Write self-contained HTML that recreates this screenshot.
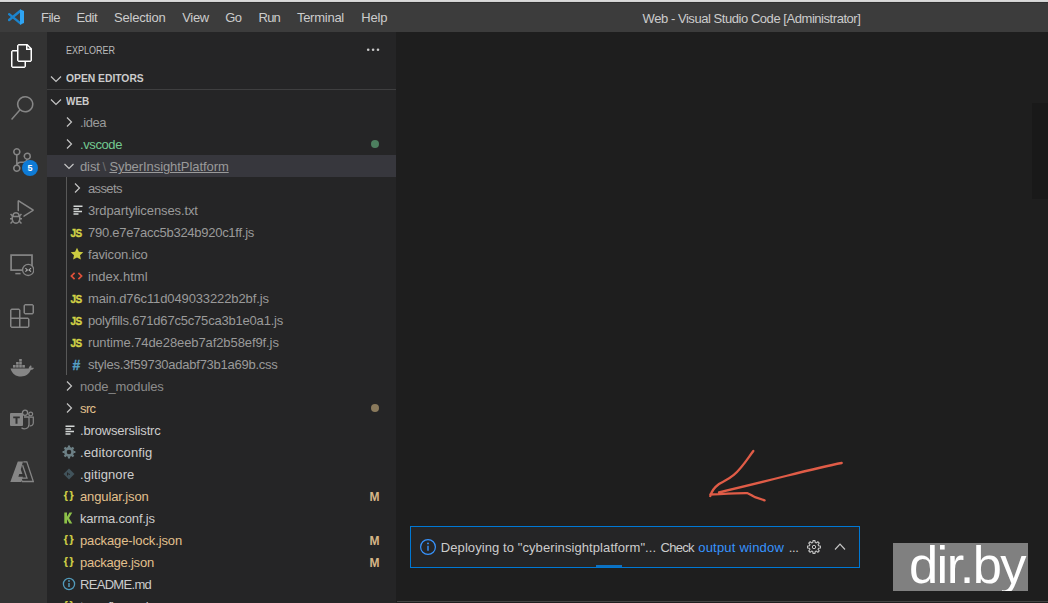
<!DOCTYPE html>
<html><head><meta charset="utf-8"><title>Web - Visual Studio Code</title>
<style>
*{box-sizing:border-box;margin:0;padding:0}
html,body{width:1048px;height:603px;overflow:hidden;background:#1e1e1e}
body{font-family:"Liberation Sans",sans-serif;font-size:13px;color:#cccccc;position:relative}
#top{position:absolute;left:0;top:0;width:1048px;height:3px;background:linear-gradient(#dcdcdc 0,#d4d4d4 1.5px,#8a8a8a 2px,#303030 2.2px,#303030 3px);z-index:5}
#title{position:absolute;left:0;top:2px;width:1048px;height:30px;background:#3c3c3c}
#title .m{position:absolute;top:1px;height:29px;line-height:30px;white-space:nowrap;font-size:13px;color:#cccccc}
#title .t{position:absolute;top:1px;height:29px;line-height:30px;font-size:12px;color:#cccccc;left:643px;white-space:nowrap}
#act{position:absolute;left:0;top:32px;width:47px;height:571px;background:#333333}
#act svg{position:absolute}
#side{position:absolute;left:47px;top:32px;width:349px;height:571px;background:#252526;overflow:hidden}
#tree{position:absolute;left:-47px;top:-32px;width:443px;height:634px}
.row{position:absolute;left:47px;width:349px;height:22px}
.row.sel{background:#37373d}
.row .ic{position:absolute;top:3px;width:16px;height:16px;margin-left:-47px}
.row .lbl{position:absolute;top:1px;height:22px;line-height:22px;white-space:nowrap;margin-left:-47px;color:#cccccc}
.row .lbl.green{color:#73c991}
.row .lbl.mod{color:#e2c08d}
.row .lbl.dim{color:#9a9a9a}
.row .lbl.sep{color:#6e6e6e}
.row .lbl.ign{color:#8c8c8c}
.dot{position:absolute;left:324px;top:6.5px;width:8px;height:8px;border-radius:50%}
.mb{position:absolute;left:322.5px;top:1px;line-height:22px;font-size:12px;font-weight:bold;color:#d6b687}
.fi{display:block;width:16px;height:16px;line-height:16px;text-align:center;font-weight:bold}
.fi.js{color:#d2d246;-webkit-text-stroke:0.35px #d2d246;font-size:10px;letter-spacing:-0.5px;position:relative;top:1.6px;left:-1px}
.fi.json{color:#d2d246;-webkit-text-stroke:0.2px #d2d246;font-size:10.5px;letter-spacing:1.6px;line-height:15px;position:relative;left:0.5px;top:0.3px}
.fi.css{color:#559fc4;font-size:14px;-webkit-text-stroke:0.3px #559fc4;position:relative;left:-0.5px;top:0.5px}
.hdr{position:absolute;font-size:11px;white-space:nowrap}
#guide{position:absolute;left:66px;top:177px;width:1px;height:198px;background:#585858}
#hsep{position:absolute;left:47px;top:89px;width:349px;height:1px;background:#3f3f40}
#notif{position:absolute;left:410px;top:526px;width:450px;height:42px;background:#252526;border:1px solid #0078d4}
#notif .msg{position:absolute;left:30px;top:0;line-height:41px;font-size:13px;color:#cccccc;white-space:nowrap}
#notif .msg.lk{color:#3794ff}
#prog{position:absolute;left:185px;top:38px;width:26px;height:2px;background:#0e70c0}
#wm{position:absolute;left:893px;top:543px;width:135px;height:48px;background:#808080;color:#fff;overflow:hidden}
#wm span{position:absolute;left:16px;top:-7.6px;font-size:52.5px;line-height:60px;letter-spacing:-1.6px;white-space:nowrap}
#mini{position:absolute;left:1032px;top:103px;width:16px;height:96px;background:#191919}
#bline{position:absolute;left:397px;top:601px;width:651px;height:1px;background:#444}
</style></head><body>
<div id="top"></div>
<div id="title">
<svg style="position:absolute;left:8px;top:6.700px" width="16.200" height="16.200" viewBox="0 0 100 100"><path d="M77 11 L7 68 M77 89 L7 32" stroke="#1c84cc" stroke-width="15" fill="none" stroke-linecap="round"/><path d="M74 2 L99 13 V87 L74 98 Z" fill="#2fa4f3"/></svg>
<span class="m" style="left:41.0px;letter-spacing:-0.488px">File</span>
<span class="m" style="left:76.6px;letter-spacing:-0.452px">Edit</span>
<span class="m" style="left:114.0px;letter-spacing:-0.22px">Selection</span>
<span class="m" style="left:182.2px;letter-spacing:-0.313px">View</span>
<span class="m" style="left:225.3px;letter-spacing:-0.572px">Go</span>
<span class="m" style="left:258.5px;letter-spacing:-0.753px">Run</span>
<span class="m" style="left:296.9px;letter-spacing:-0.253px">Terminal</span>
<span class="m" style="left:361.2px;letter-spacing:-0.138px">Help</span>
<span class="t" style="left:642.6px;font-size:13px;top:1.500px;letter-spacing:-0.45px">Web - Visual Studio Code [Administrator]</span>
</div>
<div id="act">
<svg style="left:10px;top:12px" width="24" height="24" viewBox="0 0 24 24"><path d="M17.5 0h-9L7 1.5V6H2.5L1 7.5v15.07L2.5 24h12.07L16 22.57V18h4.7l1.3-1.43V4.5L17.5 0zm0 2.12l2.38 2.38H17.5V2.12zm-3 20.38h-12v-15H7v9.07L8.5 18h6v4.5zm6-6h-12v-15H16V6h4.5v10.5z" fill="#ffffff"/></svg>
<svg style="left:10px;top:64px" width="24" height="24" viewBox="0 0 24 24"><path d="M15.25 0a8.25 8.25 0 0 0-6.18 13.72L1 22.88l1.12 1 8.05-9.12A8.251 8.251 0 1 0 15.25.01V0zm0 15a6.75 6.75 0 1 1 0-13.5 6.75 6.75 0 0 1 0 13.5z" fill="#868686"/></svg>
<svg style="left:10px;top:116px" width="24" height="24" viewBox="0 0 24 24"><path d="M21.007 8.222A3.738 3.738 0 0 0 15.045 5.2a3.737 3.737 0 0 0 1.156 6.583 2.988 2.988 0 0 1-2.668 1.67h-2.99a4.456 4.456 0 0 0-2.989 1.165V7.4a3.737 3.737 0 1 0-1.494 0v9.117a3.776 3.776 0 1 0 1.816.099 2.99 2.99 0 0 1 2.668-1.667h2.99a4.484 4.484 0 0 0 4.223-3.039 3.736 3.736 0 0 0 3.25-3.687zM4.565 3.738a2.242 2.242 0 1 1 4.484 0 2.242 2.242 0 0 1-4.484 0zm4.484 16.441a2.242 2.242 0 1 1-4.484 0 2.242 2.242 0 0 1 4.484 0zm8.221-9.715a2.242 2.242 0 1 1 0-4.485 2.242 2.242 0 0 1 0 4.485z" fill="#868686"/></svg>
<svg style="left:10px;top:168px" width="24" height="24" viewBox="0 0 24 24"><path d="M10.94 13.5l-1.32 1.32a3.73 3.73 0 0 0-7.24 0L1.06 13.5 0 14.56l1.72 1.72-.22.22V18H0v1.5h1.5v.08c.077.489.214.966.41 1.42L0 22.94 1.06 24l1.65-1.65A4.308 4.308 0 0 0 6 24a4.31 4.31 0 0 0 3.29-1.65L10.94 24 12 22.94 10.09 21c.198-.464.336-.951.41-1.45v-.1H12V18h-1.5v-1.5l-.22-.22L12 14.56l-1.06-1.06zM6 13.5a2.25 2.25 0 0 1 2.25 2.25h-4.5A2.25 2.25 0 0 1 6 13.5zm3 6a3.33 3.33 0 0 1-3 3 3.33 3.33 0 0 1-3-3v-2.25h6v2.25zm14.76-9.9v1.26L13.5 17.37V15.6l8.5-5.37L9 2v9.46a5.07 5.07 0 0 0-1.5-.72V.63L8.64 0l15.12 9.6z" fill="#868686"/></svg>
<svg style="left:10px;top:221px" width="24" height="24" viewBox="0 0 24 24"><rect x="1.1" y="2.1" width="20.9" height="15" fill="none" stroke="#868686" stroke-width="1.7"/><path d="M5.300 20.600h5.300" stroke="#868686" stroke-width="1.500"/><circle cx="18.200" cy="16.900" r="5.600" fill="#333333" stroke="#868686" stroke-width="1.300"/><path d="M15.400 15.100l2 1.800-2 1.800M21 15.100l-2 1.800 2 1.800" fill="none" stroke="#b0b0b0" stroke-width="1.100"/></svg>
<svg style="left:10px;top:272px" width="24" height="24" viewBox="0 0 24 24"><path d="M13.5 1.5L15 0h7.5L24 1.5V9l-1.5 1.5H15L13.5 9V1.5zm1.5 0V9h7.5V1.5H15zM0 15V6l1.5-1.5H9L10.5 6v7.5H18l1.5 1.5v7.5L18 24H1.5L0 22.5V15zm9-1.5V6H1.5v7.5H9zM9 15H1.5v7.5H9V15zm1.5 7.5H18V15h-7.5v7.5z" fill="#868686"/></svg>
<svg style="left:10px;top:327px" width="24" height="19" viewBox="0 0 24 19"><path d="M0.5 9.5h18.2c.3-1.6 1.2-2.6 2.3-3.2.5.9.7 1.7.5 2.6 1-.3 1.9-.2 2.5.2-.6 1.300-1.800 1.900-3.300 2-1.700 4.200-4.800 6.400-9.700 6.400-5.300 0-8.800-2.600-10.500-8z" fill="#868686"/><g fill="#868686"><rect x="3" y="6" width="2.6" height="2.6"/><rect x="6.100" y="6" width="2.600" height="2.600"/><rect x="9.200" y="6" width="2.600" height="2.600"/><rect x="12.300" y="6" width="2.600" height="2.600"/><rect x="6.100" y="3" width="2.600" height="2.600"/><rect x="9.200" y="3" width="2.600" height="2.600"/><rect x="9.200" y="0" width="2.600" height="2.600"/></g></svg>
<svg style="left:10px;top:377px" width="24" height="22" viewBox="0 0 24 22"><rect x="0" y="4" width="13" height="13" rx="1" fill="#868686"/><path d="M3.200 7.500h6.600v1.800h-2.300v5.500h-2v-5.500h-2.300z" fill="#333"/><circle cx="15" cy="3.800" r="2.600" fill="none" stroke="#868686" stroke-width="1.300"/><circle cx="20.700" cy="5" r="1.900" fill="none" stroke="#868686" stroke-width="1.200"/><path d="M14 8h5v7.500a4.500 4.500 0 0 1-7.500 3.200" fill="none" stroke="#868686" stroke-width="1.300"/><path d="M19.500 8.200h3.800v5.800a3 3 0 0 1-3.600 2.800" fill="none" stroke="#868686" stroke-width="1.200"/></svg>
<svg style="left:10px;top:429px" width="24" height="22" viewBox="0 0 24 22"><path d="M7.800 0.500H13L10.800 8.500 12.400 13H9.200L8.400 15.800H13L11 21H0.300Z" fill="#868686"/><path d="M13.300 0.800H16.800L23.300 20.500H12.300L10.600 17.200H17L12.600 4.200" fill="none" stroke="#868686" stroke-width="1.300"/></svg>
<div style="position:absolute;left:22px;top:128px;width:16px;height:16px;border-radius:50%;background:#0e7bd6;color:#fff;font-size:9px;font-weight:bold;line-height:16px;text-align:center">5</div>
</div>
<div id="side">
<div id="tree">
<span class="hdr" style="left:66.4px;color:#bbbbbb;top:44px;transform-origin:0 50%;transform:scaleX(0.8177)">EXPLORER</span>
<span class="hdr" style="left:66.4px;font-weight:bold;color:#cccccc;top:72px;transform-origin:0 50%;transform:scaleX(0.9369)">OPEN EDITORS</span>
<span class="hdr" style="left:66.4px;font-weight:bold;color:#cccccc;top:95px;transform-origin:0 50%;transform:scaleX(0.9076)">WEB</span>
<svg style="position:absolute;left:360px;top:42px" width="24" height="16" viewBox="360 42 24 16"><circle cx="368.2" cy="49.800" r="1.300" fill="#c8c8c8"/><circle cx="373.100" cy="49.800" r="1.300" fill="#c8c8c8"/><circle cx="378" cy="49.800" r="1.300" fill="#c8c8c8"/></svg>
<svg style="position:absolute;left:47.500px;top:70.500px" width="16" height="16" viewBox="0 0 16 16"><path d="M3 5.500 L8 10.500 L13 5.500" fill="none" stroke="#c5c5c5" stroke-width="1.2"/></svg>
<svg style="position:absolute;left:47.500px;top:93.500px" width="16" height="16" viewBox="0 0 16 16"><path d="M3 5.500 L8 10.500 L13 5.500" fill="none" stroke="#c5c5c5" stroke-width="1.2"/></svg>
<div id="hsep"></div>
<div class="row" style="top:111px"><span class="ic" style="left:61px"><svg class="chev" width="16" height="16" viewBox="0 0 16 16"><path d="M6 3.5 L10.5 8 L6 12.5" fill="none" stroke="#c5c5c5" stroke-width="1.2"/></svg></span><span class="lbl dim" style="left:80px;letter-spacing:-0.401px">.idea</span></div>
<div class="row" style="top:133px"><span class="ic" style="left:61px"><svg class="chev" width="16" height="16" viewBox="0 0 16 16"><path d="M6 3.5 L10.5 8 L6 12.5" fill="none" stroke="#c5c5c5" stroke-width="1.2"/></svg></span><span class="lbl green" style="left:80px;letter-spacing:-0.402px">.vscode</span><span class="dot" style="background:#4d7f5f"></span></div>
<div class="row sel" style="top:155px"><span class="ic" style="left:61px"><svg class="chev" width="16" height="16" viewBox="0 0 16 16"><path d="M3.5 6 L8 10.5 L12.5 6" fill="none" stroke="#c5c5c5" stroke-width="1.2"/></svg></span><span class="lbl dim" style="left:80px;letter-spacing:-0.109px">dist</span><span class="lbl sep" style="left:102.5px">\</span><span class="lbl dim" style="left:109.4px;letter-spacing:-0.069px;text-decoration:underline">SyberInsightPlatform</span></div>
<div class="row" style="top:177px"><span class="ic" style="left:69px"><svg class="chev" width="16" height="16" viewBox="0 0 16 16"><path d="M6 3.5 L10.5 8 L6 12.5" fill="none" stroke="#c5c5c5" stroke-width="1.2"/></svg></span><span class="lbl dim" style="left:88px;letter-spacing:-0.63px">assets</span></div>
<div class="row" style="top:199px"><span class="ic" style="left:69px"><svg class="fsvg" width="16" height="16" viewBox="0 0 16 16"><path d="M4.500 4.200h9M4.500 6.900h5.500M4.500 9.500h8.500M4.500 12.100h5" stroke="#d4d7d6" stroke-width="1.5" fill="none"/></svg></span><span class="lbl dim" style="left:88px;letter-spacing:-0.11px">3rdpartylicenses.txt</span></div>
<div class="row" style="top:221px"><span class="ic" style="left:69px"><span class="fi js">JS</span></span><span class="lbl dim" style="left:88px;letter-spacing:-0.269px">790.e7e7acc5b324b920c1ff.js</span></div>
<div class="row" style="top:243px"><span class="ic" style="left:69px"><svg class="fsvg" width="16" height="16" viewBox="0 0 16 16"><path d="M8 1.8l1.9 4 4.4.5-3.3 3 .9 4.3L8 11.4 4.1 13.6l.9-4.3-3.3-3 4.4-.5z" fill="#cbcb41"/></svg></span><span class="lbl dim" style="left:88px;letter-spacing:-0.166px">favicon.ico</span></div>
<div class="row" style="top:265px"><span class="ic" style="left:69px"><svg class="fsvg" width="16" height="16" viewBox="0 0 16 16"><path d="M5.600 4.800L2.400 8 5.600 11.200M9.400 4.800L12.600 8 9.400 11.200" stroke="#e0513a" stroke-width="1.700" fill="none"/></svg></span><span class="lbl dim" style="left:88px;letter-spacing:0.035px">index.html</span></div>
<div class="row" style="top:287px"><span class="ic" style="left:69px"><span class="fi js">JS</span></span><span class="lbl dim" style="left:88px;letter-spacing:-0.117px">main.d76c11d049033222b2bf.js</span></div>
<div class="row" style="top:309px"><span class="ic" style="left:69px"><span class="fi js">JS</span></span><span class="lbl dim" style="left:88px;letter-spacing:-0.199px">polyfills.671d67c5c75ca3b1e0a1.js</span></div>
<div class="row" style="top:331px"><span class="ic" style="left:69px"><span class="fi js">JS</span></span><span class="lbl dim" style="left:88px;letter-spacing:-0.094px">runtime.74de28eeb7af2b58ef9f.js</span></div>
<div class="row" style="top:353px"><span class="ic" style="left:69px"><span class="fi css">#</span></span><span class="lbl dim" style="left:88px;letter-spacing:-0.249px">styles.3f59730adabf73b1a69b.css</span></div>
<div class="row" style="top:375px"><span class="ic" style="left:61px"><svg class="chev" width="16" height="16" viewBox="0 0 16 16"><path d="M6 3.5 L10.5 8 L6 12.5" fill="none" stroke="#c5c5c5" stroke-width="1.2"/></svg></span><span class="lbl ign" style="left:80px;letter-spacing:-0.133px">node_modules</span></div>
<div class="row" style="top:397px"><span class="ic" style="left:61px"><svg class="chev" width="16" height="16" viewBox="0 0 16 16"><path d="M6 3.5 L10.5 8 L6 12.5" fill="none" stroke="#c5c5c5" stroke-width="1.2"/></svg></span><span class="lbl mod" style="left:80px;letter-spacing:-0.615px">src</span><span class="dot" style="background:#8a7a5c"></span></div>
<div class="row" style="top:419px"><span class="ic" style="left:61px"><svg class="fsvg" width="16" height="16" viewBox="0 0 16 16"><path d="M4.500 4.200h9M4.500 6.900h5.500M4.500 9.500h8.500M4.500 12.100h5" stroke="#d4d7d6" stroke-width="1.5" fill="none"/></svg></span><span class="lbl" style="left:80px;letter-spacing:-0.165px">.browserslistrc</span></div>
<div class="row" style="top:441px"><span class="ic" style="left:61px"><svg class="fsvg" width="16" height="16" viewBox="0 0 16 16"><circle cx="8" cy="8" r="3.6" fill="none" stroke="#6d8086" stroke-width="2.6"/><g stroke="#6d8086" stroke-width="2.2"><path d="M8 1.6v2M8 12.4v2M1.6 8h2M12.4 8h2M3.5 3.5l1.4 1.4M11.1 11.1l1.4 1.4M3.5 12.5l1.4-1.4M11.1 4.9l1.4-1.4"/></g></svg></span><span class="lbl" style="left:80px;letter-spacing:0.113px">.editorconfig</span></div>
<div class="row" style="top:463px"><span class="ic" style="left:61px"><svg class="fsvg" width="16" height="16" viewBox="0 0 16 16"><path d="M8 2.5L13.5 8 8 13.5 2.5 8z" fill="#41535b"/><path d="M6.5 6.5v3M6.5 7.5l2.5 1" stroke="#252526" stroke-width="1"/></svg></span><span class="lbl" style="left:80px;letter-spacing:0.092px">.gitignore</span></div>
<div class="row" style="top:485px"><span class="ic" style="left:61px"><span class="fi json">{}</span></span><span class="lbl mod" style="left:80px;letter-spacing:-0.119px">angular.json</span><span class="mb">M</span></div>
<div class="row" style="top:507px"><span class="ic" style="left:61px"><svg class="fsvg" width="16" height="16" viewBox="0 0 16 16"><path d="M3.300 2.600h2.700v4.200l2.500-4.200h2.800L8 8l3.300 5.500H8.500L6 9.300v4.200H3.300z" fill="#8dc149"/></svg></span><span class="lbl" style="left:80px;letter-spacing:-0.201px">karma.conf.js</span></div>
<div class="row" style="top:529px"><span class="ic" style="left:61px"><span class="fi json">{}</span></span><span class="lbl mod" style="left:80px;letter-spacing:-0.115px">package-lock.json</span><span class="mb">M</span></div>
<div class="row" style="top:551px"><span class="ic" style="left:61px"><span class="fi json">{}</span></span><span class="lbl mod" style="left:80px;letter-spacing:-0.227px">package.json</span><span class="mb">M</span></div>
<div class="row" style="top:573px"><span class="ic" style="left:61px"><svg class="fsvg" width="16" height="16" viewBox="0 0 16 16"><circle cx="8" cy="8" r="5.6" fill="none" stroke="#519aba" stroke-width="1.3"/><path d="M8 7v4" stroke="#519aba" stroke-width="1.5"/><circle cx="8" cy="5" r="0.9" fill="#519aba"/></svg></span><span class="lbl" style="left:80px;letter-spacing:-0.689px">README.md</span></div>
<div class="row" style="top:595px"><span class="ic" style="left:61px"><span class="fi json">{}</span></span><span class="lbl" style="left:80px;letter-spacing:-0.622px">tsconfig.app.json</span></div>
<div id="guide"></div>
</div>
</div>
<div id="mini"></div>
<div id="bline"></div>
<svg style="position:absolute;left:700px;top:445px" width="160" height="70" viewBox="700 445 160 70"><path d="M841.7 463 C812 468.5 781 478 719 492.3 M753.3 451 C748 458 742 468 733.8 474.9 C728 480 722 482 719 484 C715 487 711.5 491 710.3 496 M710.3 494.5 C722 494 738 493 747.6 493.2 C751 494.5 753 496.5 755 497.1 L764.6 500.3" fill="none" stroke="#e05c47" stroke-width="2.3" stroke-linecap="round" stroke-linejoin="round"/></svg>
<div id="notif">
<svg style="position:absolute;left:8px;top:11.200px" width="18" height="18" viewBox="0 0 18 18"><circle cx="9" cy="9" r="7.400" fill="none" stroke="#3794ff" stroke-width="1.200"/><path d="M9 7.800v5" stroke="#3794ff" stroke-width="1.400"/><circle cx="9" cy="5.400" r="0.950" fill="#3794ff"/></svg>
<span class="msg" style="left:29.8px;letter-spacing:0.082px">Deploying to &quot;cyberinsightplatform&quot;...</span>
<span class="msg" style="left:249.5px;letter-spacing:-0.692px">Check</span>
<span class="msg lk" style="left:287.2px;letter-spacing:0.213px">output window</span>
<span class="msg" style="left:377.8px;letter-spacing:-0.415px">...</span>
<svg style="position:absolute;left:395px;top:12px" width="16" height="16" viewBox="0 0 16 16"><path d="M6.78 3.46 L6.98 1.58 L9.02 1.58 L9.22 3.46 L10.35 3.93 L11.82 2.74 L13.26 4.18 L12.07 5.65 L12.54 6.78 L14.42 6.98 L14.42 9.02 L12.54 9.22 L12.07 10.35 L13.26 11.82 L11.82 13.26 L10.35 12.07 L9.22 12.54 L9.02 14.42 L6.98 14.42 L6.78 12.54 L5.65 12.07 L4.18 13.26 L2.74 11.82 L3.93 10.35 L3.46 9.22 L1.58 9.02 L1.58 6.98 L3.46 6.78 L3.93 5.65 L2.74 4.18 L4.18 2.74 L5.65 3.93Z" fill="none" stroke="#c5c5c5" stroke-width="1.1" stroke-linejoin="round"/><circle cx="8" cy="8" r="1.7" fill="none" stroke="#c5c5c5" stroke-width="1"/></svg>
<svg style="position:absolute;left:421px;top:12px" width="16" height="16" viewBox="0 0 16 16"><path d="M3 10.500 L8 5.200 L13 10.500" fill="none" stroke="#c5c5c5" stroke-width="1.200"/></svg>
<div id="prog"></div>
</div>
<div id="wm"><span>dir.by</span></div>
</body></html>
